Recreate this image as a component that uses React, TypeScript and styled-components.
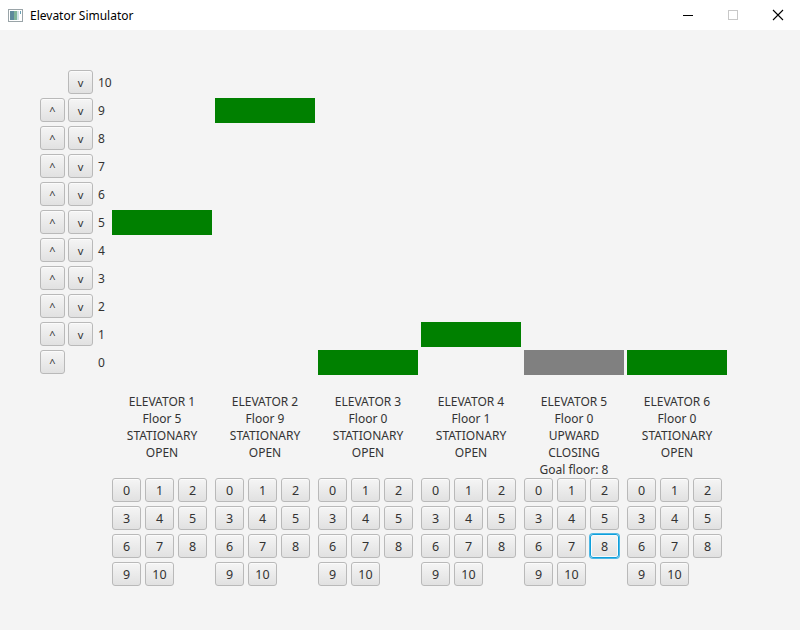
import { Fragment } from "react";
import styled, { createGlobalStyle, css } from "styled-components";

// ========================================================================================= //
// [ DATA ] ================================================================================ //
// ========================================================================================= //

type Elevator = {
  floor: number;
  direction: string;
  door: string;
  goal?: number;
  moving?: boolean;
};

const elevators: Elevator[] = [
  { floor: 5, direction: "STATIONARY", door: "OPEN" },
  { floor: 9, direction: "STATIONARY", door: "OPEN" },
  { floor: 0, direction: "STATIONARY", door: "OPEN" },
  { floor: 1, direction: "STATIONARY", door: "OPEN" },
  { floor: 0, direction: "UPWARD", door: "CLOSING", goal: 8, moving: true },
  { floor: 0, direction: "STATIONARY", door: "OPEN" },
];

const floors = [10, 9, 8, 7, 6, 5, 4, 3, 2, 1, 0];
const keys = [0, 1, 2, 3, 4, 5, 6, 7, 8, 9, 10];

// ========================================================================================= //
// [ STYLED COMPONENTS ] =================================================================== //
// ========================================================================================= //

const GlobalStyle = createGlobalStyle`
  html, body {
    margin: 0;
    padding: 0;
    background: #f4f4f4;
  }
`;

const Window = styled.div`
  width: 800px;
  height: 630px;
  display: flex;
  flex-direction: column;
  background: #f4f4f4;
  font-family: "Segoe UI", "Noto Sans", sans-serif;
  font-size: 12px;
  color: #333;
  overflow: hidden;
`;

const TitleBar = styled.div`
  height: 30px;
  flex: none;
  display: flex;
  align-items: center;
  background: #fff;
  color: #000;
`;

const AppIcon = styled.svg`
  margin: 0 7px 0 8px;
`;

const Title = styled.span`
  flex: 1;
  font-size: 12px;
`;

const WindowButton = styled.div`
  width: 45px;
  height: 30px;
  display: flex;
  align-items: center;
  justify-content: center;
`;

const Content = styled.div`
  padding: 40px 0 0 40px;
`;

const ShaftGrid = styled.div`
  display: grid;
  grid-template-columns: 25px 25px 13px repeat(6, 100px);
  grid-auto-rows: 25px;
  gap: 3px;
`;

const buttonLook = css`
  box-sizing: border-box;
  padding: 0;
  border: 1px solid #b9b9b9;
  border-radius: 3px;
  background: linear-gradient(#f5f5f5, #e1e1e1);
  box-shadow: inset 0 1px 0 #fbfbfb;
  font-family: inherit;
  font-size: 12px;
  color: #333;
  display: flex;
  align-items: center;
  justify-content: center;
`;

const CallButton = styled.button`
  ${buttonLook};
  width: 25px;
  height: 24px;
  font-size: 11px;
`;

const FloorLabel = styled.span`
  display: flex;
  align-items: center;
  padding-left: 2px;
  white-space: nowrap;
`;

const Shaft = styled.div<{ $car?: string }>`
  background: ${(p) => p.$car ?? "transparent"};
`;

const PanelRow = styled.div`
  display: flex;
  gap: 3px;
  margin: 18px 0 0 72px;
`;

const Panel = styled.div`
  width: 100px;
  display: flex;
  flex-direction: column;
`;

const Status = styled.div`
  height: 85px;
  text-align: center;
  line-height: 17px;
`;

const KeyGrid = styled.div`
  display: grid;
  grid-template-columns: repeat(3, 29px);
  grid-auto-rows: 24px;
  gap: 4px;
`;

const KeyButton = styled.button<{ $focused?: boolean }>`
  ${buttonLook};
  font-size: 12.5px;
  ${(p) =>
    p.$focused &&
    css`
      border-color: #0f9fdb;
      box-shadow: 0 0 0 1px #4cb8e6, inset 0 0 0 1px #f8fbfd;
    `}
`;

// ========================================================================================= //
// [ EXPORTED COMPONENT ] ================================================================== //
// ========================================================================================= //

export default function App() {
  return (
    <>
      <GlobalStyle />
      <Window>
        <TitleBar>
          <AppIcon width="15" height="13" viewBox="0 0 15 13">
            <rect x="0.5" y="0.5" width="14" height="12" fill="#fff" stroke="#9aa4a8" />
            <rect x="2" y="2" width="4" height="9" fill="#5d8a9c" />
            <rect x="6" y="2" width="3" height="9" fill="#7fb49a" />
            <rect x="9" y="2" width="2" height="9" fill="#cfe3e8" />
            <rect x="12" y="2" width="1" height="3" fill="#6aa0b4" />
          </AppIcon>
          <Title>Elevator Simulator</Title>
          <WindowButton>
            <svg width="12" height="12" viewBox="0 0 12 12">
              <line x1="1" y1="6.5" x2="11" y2="6.5" stroke="#000" />
            </svg>
          </WindowButton>
          <WindowButton>
            <svg width="12" height="12" viewBox="0 0 12 12">
              <rect x="1.5" y="1.5" width="9" height="9" fill="none" stroke="#c8c8c8" />
            </svg>
          </WindowButton>
          <WindowButton>
            <svg width="12" height="12" viewBox="0 0 12 12">
              <path d="M1 1 L11 11 M11 1 L1 11" stroke="#000" strokeWidth="1.1" />
            </svg>
          </WindowButton>
        </TitleBar>

        <Content>
          <ShaftGrid>
            {floors.map((f) => (
              <Fragment key={f}>
                {f < 10 ? <CallButton>^</CallButton> : <span />}
                {f > 0 ? <CallButton>v</CallButton> : <span />}
                <FloorLabel>{f}</FloorLabel>
                {elevators.map((e, i) => (
                  <Shaft
                    key={i}
                    $car={e.floor === f ? (e.moving ? "#808080" : "#008000") : undefined}
                  />
                ))}
              </Fragment>
            ))}
          </ShaftGrid>

          <PanelRow>
            {elevators.map((e, i) => (
              <Panel key={i}>
                <Status>
                  <div>ELEVATOR {i + 1}</div>
                  <div>Floor {e.floor}</div>
                  <div>{e.direction}</div>
                  <div>{e.door}</div>
                  {e.goal !== undefined && <div>Goal floor: {e.goal}</div>}
                </Status>
                <KeyGrid>
                  {keys.map((k) => (
                    <KeyButton key={k} $focused={e.goal === k}>
                      {k}
                    </KeyButton>
                  ))}
                </KeyGrid>
              </Panel>
            ))}
          </PanelRow>
        </Content>
      </Window>
    </>
  );
}
